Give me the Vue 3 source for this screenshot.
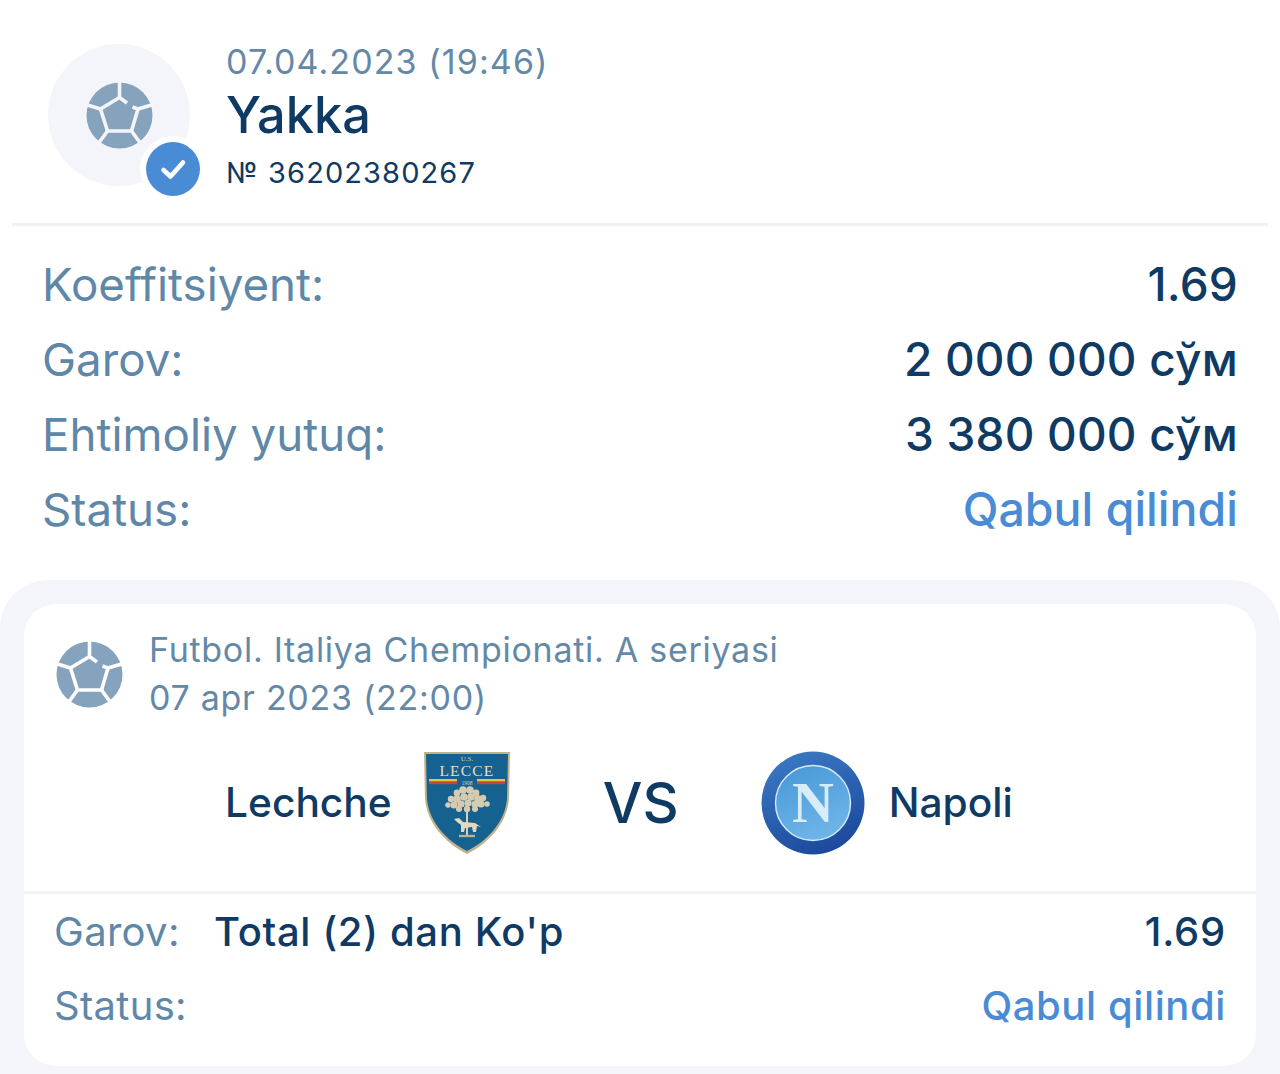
<script setup>
const summary = [
  { label: 'Koeffitsiyent:', value: '1.69' },
  { label: 'Garov:', value: '2 000 000 сўм' },
  { label: 'Ehtimoliy yutuq:', value: '3 380 000 сўм' },
  { label: 'Status:', value: 'Qabul qilindi', accent: true }
]
const leaves = [
  [34,42,3.4],[40,39,3.8],[47,39,3.8],[53,42,3.4],[28,48,3.2],[34,48,3.8],[41,46,3.8],[48,46,3.8],[55,48,3.8],[60,47,3.2],
  [25,54,2.8],[31,54,3.6],[38,53,3.6],[45,52,3.6],[52,53,3.6],[58,53,3.6],[64,53,2.8],[36,58,3],[44,58,3.2],[52,58,3]
]
</script>

<template>
  <main class="page">
    <header class="head">
      <div class="avatar">
        <svg class="ball" viewBox="0 0 67 67" aria-hidden="true">
          <circle cx="33.5" cy="33.5" r="33" fill="#86a3bd" />
          <g fill="none" stroke="#f3f5fa" stroke-width="3.6">
            <path d="M33.5 0V15.5L41 21M46.5 25L52 27L45.5 49H21.5L14.5 27L33.5 15.5" />
            <path d="M52 27L67 22.5M14.5 27L0 22.5M45.5 49L55 62M21.5 49L12 62" />
          </g>
        </svg>
        <span class="badge">
          <svg viewBox="0 0 54 54" aria-hidden="true">
            <path d="M17.5 28L24.5 34.5L37 20.5" fill="none" stroke="#fff" stroke-width="4.6" stroke-linecap="round" stroke-linejoin="round" />
          </svg>
        </span>
      </div>
      <div class="head-text">
        <div class="date">07.04.2023 (19:46)</div>
        <h1>Yakka</h1>
        <div class="num">№ 36202380267</div>
      </div>
    </header>

    <section class="summary">
      <div v-for="row in summary" :key="row.label" class="sum-row">
        <span class="sum-label">{{ row.label }}</span>
        <span :class="row.accent ? 'sum-accent' : 'sum-value'">{{ row.value }}</span>
      </div>
    </section>

    <section class="panel">
      <article class="card">
        <div class="league">
          <svg class="ball" viewBox="0 0 67 67" aria-hidden="true">
            <circle cx="33.5" cy="33.5" r="33" fill="#86a3bd" />
            <g fill="none" stroke="#fff" stroke-width="3.6">
              <path d="M33.5 0V15.5L41 21M46.5 25L52 27L45.5 49H21.5L14.5 27L33.5 15.5" />
              <path d="M52 27L67 22.5M14.5 27L0 22.5M45.5 49L55 62M21.5 49L12 62" />
            </g>
          </svg>
          <div class="league-text">
            <div>Futbol. Italiya Chempionati. A seriyasi</div>
            <div>07 apr 2023 (22:00)</div>
          </div>
        </div>

        <div class="match">
          <div class="team team-home">
            <span class="team-name">Lechche</span>
            <svg class="shield" viewBox="0 0 88 104" aria-hidden="true">
              <path d="M1 1H87L86 48C84 72 66 92 44 103C22 92 4 72 2 48Z" fill="#bfb28a" />
              <path d="M3 3H85L84 48C82 71 64 90 44 100C24 90 6 71 4 48Z" fill="#15618f" />
              <text x="44" y="9.5" class="s-us">U.S.</text>
              <text x="44" y="25.2" class="s-lecce">LECCE</text>
              <rect x="6" y="28" width="28" height="2.6" fill="#e6c63c" />
              <rect x="6" y="30.6" width="28" height="2.6" fill="#c9453a" />
              <rect x="54" y="28" width="28" height="2.6" fill="#e6c63c" />
              <rect x="54" y="30.6" width="28" height="2.6" fill="#c9453a" />
              <text x="44" y="33.6" class="s-year">1908</text>
              <path d="M44 50V84" stroke="#d9cfae" stroke-width="2" />
              <circle v-for="(l, i) in leaves" :key="i" :cx="l[0]" :cy="l[1]" :r="l[2]" fill="#d6cbb0" />
              <path d="M31 68L36 67L40 71L52 72L58 76L54 75L53 81L50 81L49 76L42 77L41 81L38 81L38 74L34 71Z" fill="#e2d8bf" />
              <path d="M36 85H52" stroke="#bfb28a" stroke-width="2.4" />
            </svg>
          </div>
          <div class="vs">VS</div>
          <div class="team team-away">
            <svg class="crest" viewBox="0 0 104 104" aria-hidden="true">
              <defs>
                <linearGradient id="ring" x1="0.3" y1="0" x2="0.7" y2="1">
                  <stop offset="0" stop-color="#3a78c2" />
                  <stop offset="1" stop-color="#1b479c" />
                </linearGradient>
                <linearGradient id="disc" x1="0.3" y1="0" x2="0.7" y2="1">
                  <stop offset="0" stop-color="#4a9ad8" />
                  <stop offset="1" stop-color="#70b7ea" />
                </linearGradient>
              </defs>
              <circle cx="52" cy="52" r="51.5" fill="url(#ring)" />
              <circle cx="52" cy="52" r="37.5" fill="url(#disc)" stroke="#d6ebf8" stroke-width="1.4" />
              <text x="52" y="71" class="n">N</text>
            </svg>
            <span class="team-name">Napoli</span>
          </div>
        </div>

        <div class="bet">
          <div class="bet-row">
            <span class="bet-label">Garov:</span>
            <span class="bet-name">Total (2) dan Ko'p</span>
            <span class="bet-odd">1.69</span>
          </div>
          <div class="bet-row bet-row-status">
            <span class="bet-label">Status:</span>
            <span class="bet-status">Qabul qilindi</span>
          </div>
        </div>
      </article>
    </section>
  </main>
</template>

<style scoped>
.page {
  width: 1280px;
  height: 1074px;
  overflow: hidden;
  background: #fff;
  font-family: Inter, "Liberation Sans", sans-serif;
  color: #0f3a64;
}
.head {
  margin: 0 12px;
  padding: 44px 0 0 36px;
  box-sizing: border-box;
  display: flex;
  gap: 36px;
  border-bottom: 3px solid #f0f2f6;
  height: 226px;
}
.avatar {
  position: relative;
  width: 142px;
  height: 142px;
  border-radius: 50%;
  background: #f3f5fa;
  display: flex;
  align-items: center;
  justify-content: center;
  flex: none;
}
.ball {
  width: 67px;
  height: 67px;
  flex: none;
}
.badge {
  position: absolute;
  left: 98px;
  top: 98px;
  width: 54px;
  height: 54px;
  border-radius: 50%;
  background: #4a8bd6;
  box-shadow: 0 0 0 6px #fff;
}
.badge svg {
  display: block;
  width: 54px;
  height: 54px;
}
.head-text {
  margin-top: -4px;
}
.date {
  font-size: 34px;
  line-height: 44px;
  letter-spacing: 1.1px;
  color: #6489a8;
}
h1 {
  margin: 0;
  font-size: 50.5px;
  line-height: 62px;
  font-weight: 500;
  color: #0f3a64;
}
.num {
  margin-top: 7px;
  font-size: 29px;
  line-height: 40px;
  letter-spacing: 1.1px;
}
.summary {
  padding: 21px 42px 0;
}
.sum-row {
  display: flex;
  justify-content: space-between;
  height: 75px;
  line-height: 75px;
  font-size: 45.7px;
}
.sum-label {
  color: #5f87a8;
}
.sum-value {
  color: #0f3a64;
  font-weight: 500;
  font-size: 46px;
  letter-spacing: 0.2px;
}
.sum-accent {
  color: #4a8bd6;
  font-weight: 500;
  font-size: 46.5px;
}
.panel {
  margin-top: 33px;
  height: 500px;
  padding: 24px;
  box-sizing: border-box;
  background: #f3f5fa;
  border-radius: 48px 48px 0 0;
}
.card {
  height: 462px;
  background: #fff;
  border-radius: 32px;
  overflow: hidden;
}
.league {
  display: flex;
  align-items: center;
  gap: 26px;
  padding: 22px 32px 0;
}
.league-text {
  font-size: 34px;
  line-height: 48px;
  letter-spacing: 0.72px;
  color: #6489a8;
}
.match {
  height: 169px;
  display: flex;
  align-items: center;
  padding: 0 0 0 201px;
  border-bottom: 3px solid #f0f2f6;
}
.team {
  display: flex;
  align-items: center;
  position: relative;
  top: -4px;
}
.team-name {
  font-size: 40.7px;
  font-weight: 500;
}
.team-home {
  gap: 31px;
}
.team-away {
  gap: 24px;
}
.shield {
  width: 88px;
  height: 104px;
  display: block;
}
.crest {
  width: 104px;
  height: 104px;
  display: block;
}
.vs {
  margin: -8px 82px 0 92px;
  font-size: 56px;
  font-weight: 500;
}
.bet {
  padding: 0 30px;
}
.bet-row {
  height: 74px;
  display: flex;
  align-items: center;
  font-size: 40px;
}
.bet-label {
  color: #5f87a8;
  width: 160px;
  letter-spacing: 0.3px;
  flex: none;
}
.bet-name {
  font-weight: 500;
  flex: 1;
  letter-spacing: 0.67px;
}
.bet-odd {
  font-weight: 500;
  letter-spacing: 0.8px;
}
.bet-row-status {
  justify-content: space-between;
}
.bet-status {
  color: #4a8bd6;
  font-weight: 500;
  letter-spacing: 0.6px;
}
.s-us, .s-lecce, .s-year, .n {
  font-family: "Liberation Serif", serif;
  text-anchor: middle;
}
.s-us {
  font-size: 7px;
  fill: #d9cfae;
}
.s-lecce {
  font-size: 15.5px;
  fill: #e6dfc8;
  letter-spacing: 1.2px;
}
.s-year {
  font-size: 5.5px;
  fill: #d9cfae;
}
.n {
  font-size: 58px;
  font-weight: 700;
  fill: #d8edfa;
}
</style>
